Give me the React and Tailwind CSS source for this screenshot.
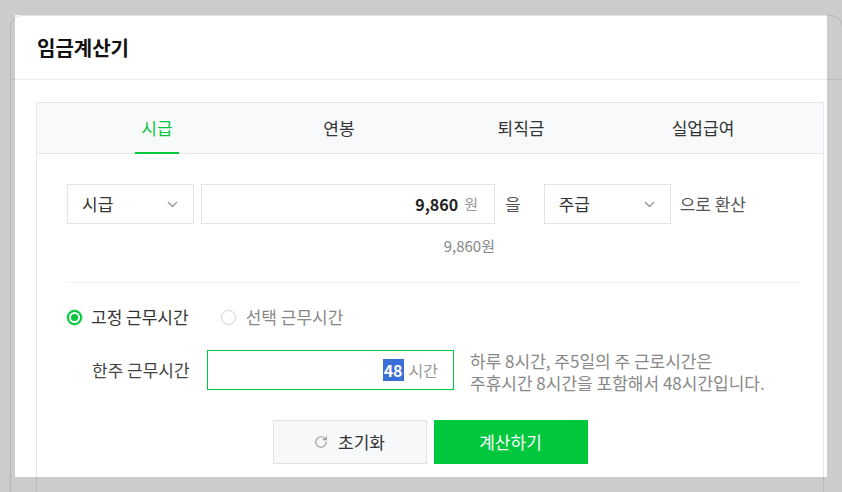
import { RotateCw } from 'lucide-react'

const tabs = ['시급', '연봉', '퇴직금', '실업급여']

function Chevron() {
  return (
    <svg width="11" height="7" viewBox="0 0 11 7" fill="none">
      <polyline points="1,1 5.5,5.5 10,1" stroke="#9a9a9a" strokeWidth="1.4" />
    </svg>
  )
}

function Select({ value }) {
  return (
    <div className="w-[127px] h-[40px] border border-[#e1e4e8] bg-white flex items-center justify-between pl-[14px] pr-[15px]">
      <span className="text-[17px] text-[#333]">{value}</span>
      <Chevron />
    </div>
  )
}

export default function App() {
  return (
    <div className="relative w-[842px] h-[492px] overflow-hidden bg-white font-['Noto_Sans_CJK_KR',sans-serif] leading-[20px]">
      <div className="ml-[10px] mt-[15px] w-[833px] h-[600px] border border-[#e2e2e2] rounded-t-[12px] bg-white">
        <div className="h-[64px] border-b border-[#ececec] flex items-center pl-[26px]">
          <h1 className="text-[20px] font-bold text-[#111]">임금계산기</h1>
        </div>

        <div className="ml-[25px] mt-[22px] w-[788px] border border-[#e6e8eb]">
          <div className="h-[51px] border-b border-[#e6e8eb] bg-[#f8f9fb] flex px-[29px]">
            {tabs.map((t, i) => (
              <div key={t} className="flex-1 flex justify-center">
                <div className={`relative flex items-center px-[6px] text-[17px] ${i === 0 ? 'text-[#00c73c]' : 'text-[#333]'}`}>
                  {t}
                  {i === 0 && <span className="absolute left-0 right-0 bottom-[-1px] h-[2px] bg-[#00c73c]" />}
                </div>
              </div>
            ))}
          </div>

          <div className="px-[30px] pt-[30px] pb-[40px]">
            <div className="flex items-center">
              <Select value="시급" />
              <div className="ml-[7px] w-[294px] h-[40px] border border-[#e1e4e8] flex items-center justify-end pr-[16px]">
                <span className="text-[16px] font-bold text-[#222]">9,860</span>
                <span className="ml-[6px] text-[15px] text-[#999]">원</span>
              </div>
              <span className="ml-[10px] mr-[23px] text-[17px] text-[#555]">을</span>
              <Select value="주급" />
              <span className="ml-[9px] text-[17px] text-[#555]">으로 환산</span>
            </div>
            <div className="w-[428px] mt-[12px] text-right text-[15px] text-[#888]">9,860원</div>

            <div className="mt-[26px] h-px bg-[#eef0f3] -mr-[6px]" />

            <div className="mt-[24px] flex items-center text-[17px]">
              <span className="w-[15px] h-[15px] rounded-full border-2 border-[#00c73c] bg-white flex items-center justify-center shadow-[0_0_0_1px_#c8f0d4]">
                <span className="w-[7px] h-[7px] rounded-full bg-[#00c73c]" />
              </span>
              <span className="ml-[9px] text-[#333]">고정 근무시간</span>
              <span className="ml-[32px] w-[15px] h-[15px] rounded-full border border-[#d0d0d0] bg-white" />
              <span className="ml-[10px] text-[#888]">선택 근무시간</span>
            </div>

            <div className="mt-[23px] flex items-start">
              <div className="ml-[25px] w-[100px] h-[40px] flex items-center text-[17px] text-[#444] whitespace-nowrap">한주 근무시간</div>
              <div className="ml-[15px] w-[247px] h-[40px] border border-[#00c73c] flex items-center justify-end pr-[15px]">
                <span className="bg-[#3a6fd8] text-white font-bold text-[16px] leading-[22px] px-[1px]">48</span>
                <span className="ml-[5px] text-[16px] text-[#999]">시간</span>
              </div>
              <div className="ml-[16px] text-[17px] leading-[22px] text-[#888] whitespace-nowrap">
                <p>하루 8시간, 주5일의 주 근로시간은</p>
                <p>주휴시간 8시간을 포함해서 48시간입니다.</p>
              </div>
            </div>

            <div className="mt-[26px] flex justify-center gap-[7px]">
              <button className="w-[154px] h-[44px] border border-[#dfe2e6] bg-[#f7f8fa] flex items-center justify-center gap-[10px] text-[17px] text-[#333]">
                <RotateCw className="w-[14px] h-[14px] text-[#999]" strokeWidth={2} />
                초기화
              </button>
              <button className="w-[154px] h-[44px] bg-[#00c73c] text-white text-[17px]">계산하기</button>
            </div>
          </div>
        </div>
      </div>

      <div className="absolute left-[15px] top-[15px] w-[812px] h-[462px] shadow-[0_0_0_2000px_rgba(0,0,0,0.2)] pointer-events-none" />
    </div>
  )
}
